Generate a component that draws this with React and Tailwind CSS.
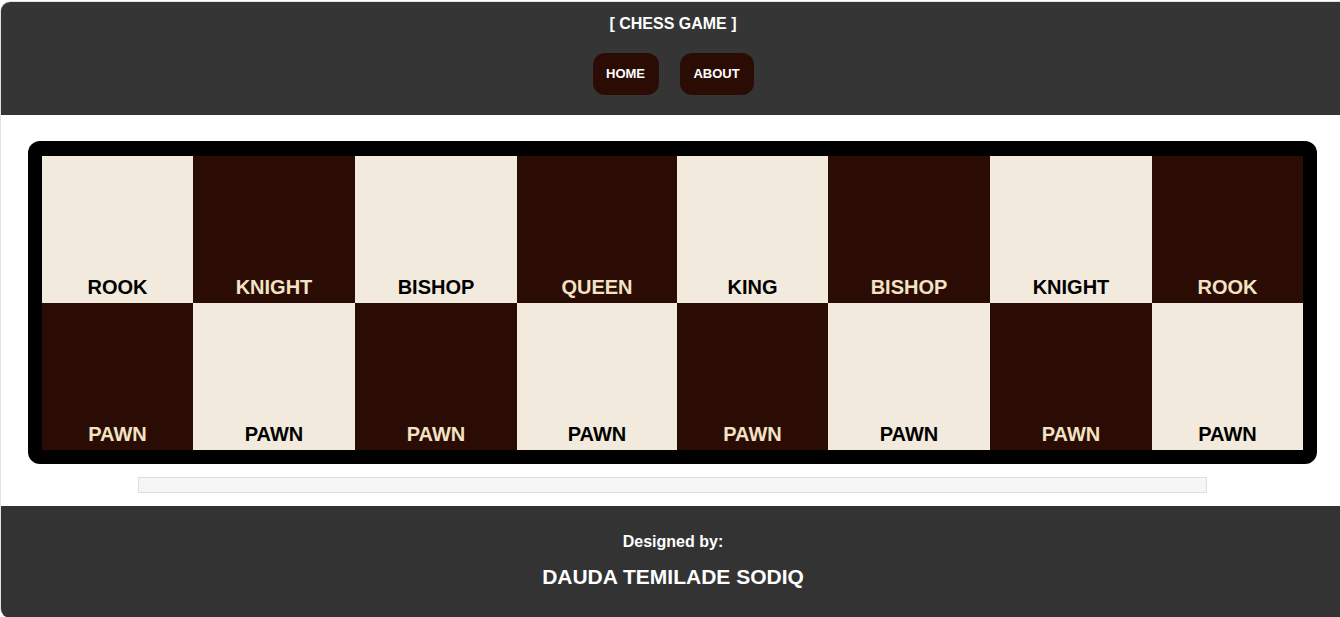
import React from 'react';

const backRow = ['ROOK', 'KNIGHT', 'BISHOP', 'QUEEN', 'KING', 'BISHOP', 'KNIGHT', 'ROOK'];

// Square is light when (row + col) is even
const Square = ({ name, light }) => (
    <div
        className={`flex items-end justify-center pb-[1px] h-[147px] ${
            light ? 'bg-[#f2eadc] text-black' : 'bg-[#2b0c04] text-[#f3e3c4]'
        }`}
    >
        <span className="text-[20px] font-bold leading-[30px]">{name}</span>
    </div>
);

const App = () => {
    const rows = [backRow, Array(8).fill('PAWN')];

    return (
        <div className="min-h-[617px] bg-white font-['Liberation_Sans',Arial,sans-serif] pt-[1px]">
            <div className="border-l border-t border-[#e2e2e2] rounded-l-[10px] w-[1345px]">
                {/* Header */}
                <header className="bg-[#353535] rounded-tl-[9px] h-[113px] flex flex-col items-center pt-[12px]">
                    <h1 className="text-white text-[16px] font-bold leading-[20px]">[ CHESS GAME ]</h1>
                    <nav className="flex gap-[21px] mt-[19px]">
                        <button className="h-[42px] w-[66px] rounded-[12px] bg-[#2b0c04] text-white text-[13px] font-bold">
                            HOME
                        </button>
                        <button className="h-[42px] w-[74px] rounded-[12px] bg-[#2b0c04] text-white text-[13px] font-bold">
                            ABOUT
                        </button>
                    </nav>
                </header>

                {/* Board */}
                <main className="pt-[26px] pb-[13px]">
                    <div className="ml-[27px] w-[1289px] bg-black rounded-[12px] px-[14px] pt-[15px] pb-[14px]">
                        <div className="grid grid-cols-[151px_162px_162px_160px_151px_162px_162px_151px]">
                            {rows.map((row, r) =>
                                row.map((name, c) => (
                                    <Square key={`${r}-${c}`} name={name} light={(r + c) % 2 === 0} />
                                ))
                            )}
                        </div>
                    </div>
                    <div className="ml-[137px] mt-[13px] w-[1069px] h-[16px] bg-[#f7f6f6] border border-[#dedede]"></div>
                </main>

                {/* Footer */}
                <footer className="bg-[#333333] rounded-bl-[9px] h-[112px] flex flex-col items-center pt-[26px]">
                    <p className="text-white text-[16px] font-bold leading-[20px]">Designed by:</p>
                    <p className="text-white text-[21px] font-bold leading-[24px] mt-[13px]">DAUDA TEMILADE SODIQ</p>
                </footer>
            </div>
        </div>
    );
};

export default App;
